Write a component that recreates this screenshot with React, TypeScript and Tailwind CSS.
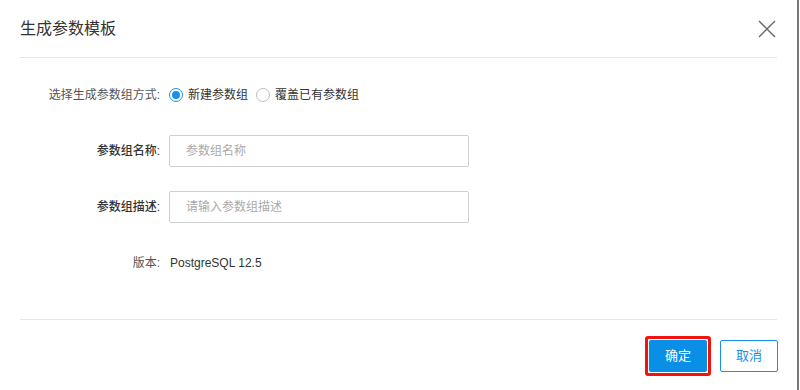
import React, { useState } from 'react';

const FONT = { fontFamily: '"Liberation Sans", "Noto Sans CJK SC", sans-serif' };

export default function App() {
  const [mode, setMode] = useState<'new' | 'cover'>('new');
  const [name, setName] = useState('');
  const [desc, setDesc] = useState('');

  return (
    <div className="flex h-[390px] w-[800px] bg-white" style={FONT}>
      <div className="flex w-[797px] flex-col">
        {/* header */}
        <div className="mx-5 flex h-[58px] items-center justify-between border-b border-[#e6e6e6]">
          <h2 className="text-[16px] text-[#333]">生成参数模板</h2>
          <button className="mr-[1px] text-[#666]">
            <svg width="18" height="18" viewBox="0 0 18 18" fill="none" stroke="currentColor" strokeWidth="1.4">
              <path d="M1 1L17 17M17 1L1 17" />
            </svg>
          </button>
        </div>

        {/* body */}
        <div className="flex flex-col gap-6 px-5 pb-[40px] pt-[21px] text-[12px] text-[#333]">
          <div className="flex h-8 items-center gap-[9px]">
            <label className="w-[140px] text-right text-[#555]">选择生成参数组方式:</label>
            <div className="flex items-center">
              <button onClick={() => setMode('new')} className="flex items-center">
                <span className={`flex h-[14px] w-[14px] items-center justify-center rounded-full border ${mode === 'new' ? 'border-[#1890e8]' : 'border-[#c0c0c0]'}`}>
                  {mode === 'new' && <span className="h-[8px] w-[8px] rounded-full bg-[#1890e8]" />}
                </span>
                <span className="ml-[5px]">新建参数组</span>
              </button>
              <button onClick={() => setMode('cover')} className="ml-[8px] flex items-center">
                <span className={`flex h-[14px] w-[14px] items-center justify-center rounded-full border ${mode === 'cover' ? 'border-[#1890e8]' : 'border-[#c0c0c0]'}`}>
                  {mode === 'cover' && <span className="h-[8px] w-[8px] rounded-full bg-[#1890e8]" />}
                </span>
                <span className="ml-[5px]">覆盖已有参数组</span>
              </button>
            </div>
          </div>

          <div className="flex h-8 items-center gap-[9px]">
            <label className="w-[140px] text-right font-medium">参数组名称:</label>
            <input
              value={name}
              onChange={(e) => setName(e.target.value)}
              placeholder="参数组名称"
              className="h-8 w-[300px] rounded-[2px] border border-[#d0d0d0] px-4 text-[12px] outline-none placeholder:text-[#aaa]"
            />
          </div>

          <div className="flex h-8 items-center gap-[9px]">
            <label className="w-[140px] text-right font-medium">参数组描述:</label>
            <input
              value={desc}
              onChange={(e) => setDesc(e.target.value)}
              placeholder="请输入参数组描述"
              className="h-8 w-[300px] rounded-[2px] border border-[#d0d0d0] px-4 text-[12px] outline-none placeholder:text-[#aaa]"
            />
          </div>

          <div className="flex h-8 items-center gap-[9px]">
            <label className="w-[140px] text-right text-[#555]">版本:</label>
            <span className="ml-[1px]">PostgreSQL 12.5</span>
          </div>
        </div>

        {/* footer */}
        <div className="mx-5 flex justify-end border-t border-[#e6e6e6] pt-[16px]">
          <div className="rounded-[3px] border-[3px] border-[#f0140c] p-px">
            <button className="h-8 w-[58px] rounded-[2px] bg-[#0a8fe6] text-[13px] text-white">确定</button>
          </div>
          <button className="ml-[9px] mr-[-1px] mt-[4px] h-8 w-[58px] rounded-[2px] border border-[#1890e8] bg-white text-[13px] text-[#1890e8]">
            取消
          </button>
        </div>
      </div>
      <div className="w-[2px] bg-[#777]" />
    </div>
  );
}
